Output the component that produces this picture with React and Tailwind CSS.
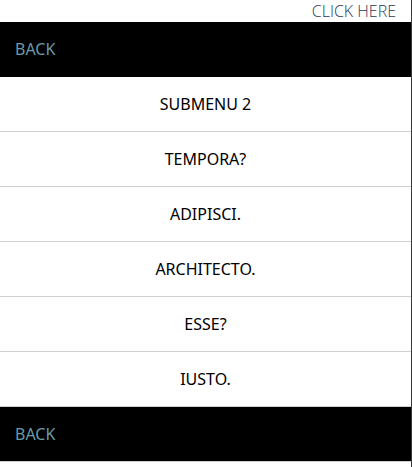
const items = ['SUBMENU 2', 'TEMPORA?', 'ADIPISCI.', 'ARCHITECTO.', 'ESSE?', 'IUSTO.']

export default function App() {
  return (
    <div
      className="min-h-[467px] w-[412px] border-r border-[#3a3a3a] bg-white"
      style={{ fontFamily: '"Noto Sans", "DejaVu Sans", sans-serif' }}
    >
      <div className="flex h-[22px] items-center justify-end pr-[15px]">
        <span
          className="text-[16px] font-light leading-none text-[#2c3856]"
          style={{ fontFamily: '"Open Sans", sans-serif' }}
        >
          CLICK HERE
        </span>
      </div>
      <div className="flex h-[55px] items-center bg-black px-[15px] pb-[2px]">
        <span className="text-[16px] text-[#6a9aaa]">BACK</span>
      </div>
      <ul>
        {items.map((label) => (
          <li
            key={label}
            className="flex h-[55px] items-center justify-center border-b border-[#d0d0d0] pb-[1px] text-[16px] text-black"
          >
            {label}
          </li>
        ))}
      </ul>
      <div className="border-b border-[#d0d0d0]">
        <div className="flex h-[54px] items-center bg-black px-[15px] pb-[1px]">
          <span className="text-[16px] text-[#6a9aaa]">BACK</span>
        </div>
      </div>
    </div>
  )
}
